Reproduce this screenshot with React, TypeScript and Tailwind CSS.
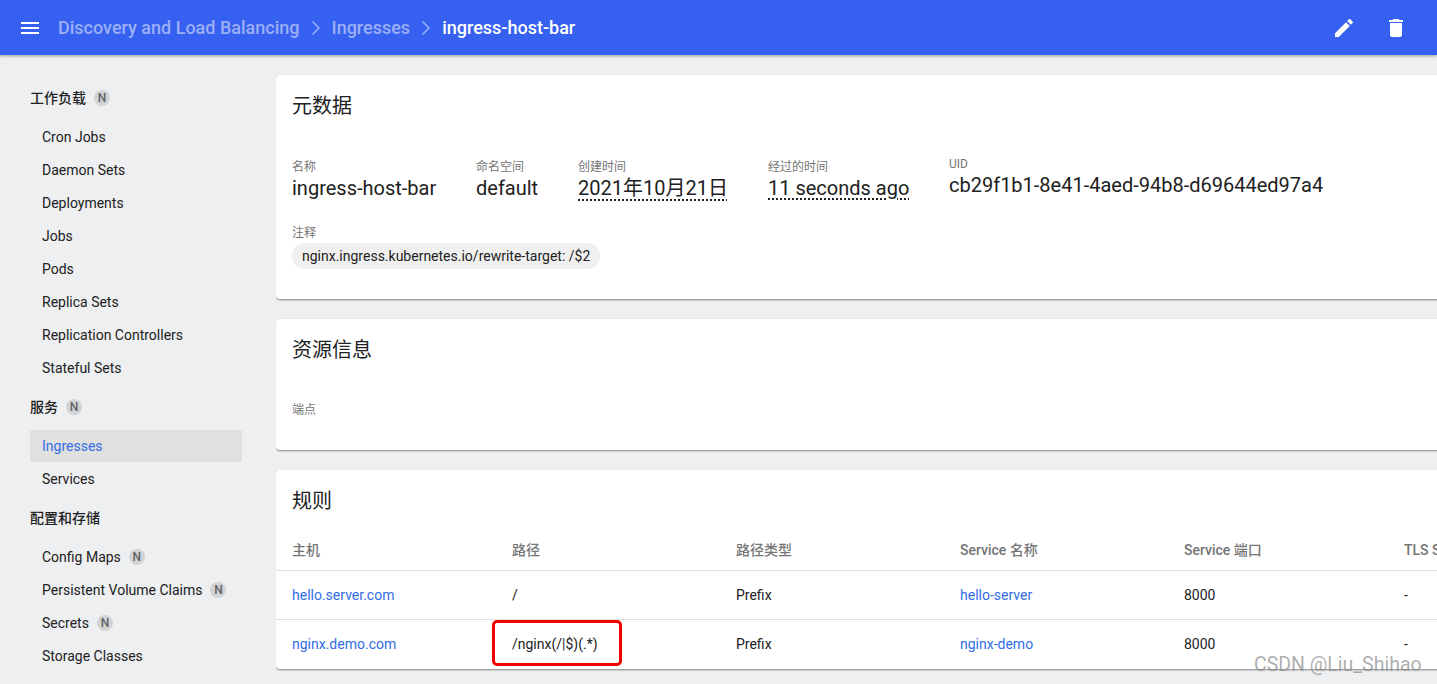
import { ChevronRight } from "lucide-react";

const font = { sans: "font-['Roboto','Noto_Sans_CJK_SC',sans-serif]" };

function NBadge() {
  return (
    <span className="ml-[8px] flex h-[16px] w-[16px] items-center justify-center rounded-full bg-[#d2d3d5] text-[12px] font-medium leading-none text-[#5f6368]">
      N
    </span>
  );
}

function NavItem({ label, badge, active }: { label: string; badge?: boolean; active?: boolean }) {
  return (
    <div
      className={`flex h-[32px] items-center rounded-[2px] pl-[12px] text-[14px] ${
        active ? "bg-[#e0e0e0] text-[#326de6]" : "text-[#212121]"
      }`}
    >
      {label}
      {badge && <NBadge />}
    </div>
  );
}

function Sidebar() {
  return (
    <aside className="w-[276px] shrink-0 pl-[30px] pr-[34px] pt-[27px]">
      <div className="flex h-[32px] items-center text-[14px] font-medium text-[#212121]">
        工作负载
        <NBadge />
      </div>
      <div className="mt-[7px] flex flex-col gap-[1px]">
        <NavItem label="Cron Jobs" />
        <NavItem label="Daemon Sets" />
        <NavItem label="Deployments" />
        <NavItem label="Jobs" />
        <NavItem label="Pods" />
        <NavItem label="Replica Sets" />
        <NavItem label="Replication Controllers" />
        <NavItem label="Stateful Sets" />
      </div>
      <div className="mt-[7px] flex h-[32px] items-center text-[14px] font-medium text-[#212121]">
        服务
        <NBadge />
      </div>
      <div className="mt-[7px] flex flex-col gap-[1px]">
        <NavItem label="Ingresses" active />
        <NavItem label="Services" />
      </div>
      <div className="mt-[7px] flex h-[32px] items-center text-[14px] font-medium text-[#212121]">配置和存储</div>
      <div className="mt-[7px] flex flex-col gap-[1px]">
        <NavItem label="Config Maps" badge />
        <NavItem label="Persistent Volume Claims" badge />
        <NavItem label="Secrets" badge />
        <NavItem label="Storage Classes" />
      </div>
    </aside>
  );
}

function Meta({ label, value, dotted, className }: { label: string; value: string; dotted?: string; className: string }) {
  return (
    <div className={className}>
      <div className="text-[12px] leading-[16px] text-[#757575]">{label}</div>
      <div className="mt-[1px] text-[20px] leading-[24px] text-[#212121]">
        <span className={dotted}>{value}</span>
      </div>
    </div>
  );
}

function Card({ title, className, children }: { title: string; className: string; children: React.ReactNode }) {
  return (
    <section className={`w-[1300px] rounded-[4px] bg-white px-[16px] shadow-[0_1px_2px_rgba(0,0,0,0.45)] ${className}`}>
      <h2 className="pt-[18px] text-[20px] font-normal leading-[26px] text-[#212121]">{title}</h2>
      {children}
    </section>
  );
}

const rows = [
  { host: "hello.server.com", path: "/", service: "hello-server" },
  { host: "nginx.demo.com", path: "/nginx(/|$)(.*)", service: "nginx-demo" },
];

const cols = "grid grid-cols-[220px_224px_224px_224px_220px_100px] items-center";

export default function App() {
  return (
    <div className={`flex h-[684px] w-[1437px] flex-col overflow-hidden bg-[#eeeff1] ${font.sans}`}>
      <header className="relative z-10 flex h-[55px] shrink-0 items-center bg-[#3560f0] pl-[21px] shadow-[0_1px_3px_rgba(0,0,0,0.35)]">
        <svg width="18" height="12" viewBox="0 0 18 12" fill="white" className="mr-[19px]">
          <path d="M0 12h18v-2H0v2zm0-5h18V5H0v2zM0 0v2h18V0H0z" />
        </svg>
        <span className="text-[18px] font-medium text-white/50">Discovery and Load Balancing</span>
        <ChevronRight className="mx-[4px] h-[24px] w-[24px] text-white/50" strokeWidth={1.5} />
        <span className="text-[18px] font-medium text-white/50">Ingresses</span>
        <ChevronRight className="mx-[4px] h-[24px] w-[24px] text-white/50" strokeWidth={1.5} />
        <span className="text-[18px] font-medium text-white">ingress-host-bar</span>
        <div className="ml-auto mr-[29px] flex items-center gap-[28px]">
          <svg width="24" height="24" viewBox="0 0 24 24" fill="white">
            <path d="M3 17.25V21h3.75L17.81 9.94l-3.75-3.75L3 17.25zM20.71 7.04c.39-.39.39-1.02 0-1.41l-2.34-2.34c-.39-.39-1.02-.39-1.41 0l-1.83 1.83 3.75 3.75 1.83-1.83z" />
          </svg>
          <svg width="24" height="24" viewBox="0 0 24 24" fill="white">
            <path d="M6 19c0 1.1.9 2 2 2h8c1.1 0 2-.9 2-2V7H6v12zM19 4h-3.5l-1-1h-5l-1 1H5v2h14V4z" />
          </svg>
        </div>
      </header>

      <div className="flex min-h-0 flex-1">
        <Sidebar />
        <main className="min-w-0 flex-1 overflow-hidden pt-[20px]">
          <Card title="元数据" className="h-[224px]">
            <div className="mt-[40px] flex">
              <Meta label="名称" value="ingress-host-bar" className="w-[184px]" />
              <Meta label="命名空间" value="default" className="w-[102px]" />
              <Meta
                label="创建时间"
                value="2021年10月21日"
                dotted="underline decoration-dotted decoration-2 underline-offset-[4px]"
                className="w-[190px]"
              />
              <Meta
                label="经过的时间"
                value="11 seconds ago"
                dotted="underline decoration-dotted decoration-2 underline-offset-[3px]"
                className="w-[181px]"
              />
              <div className="-mt-[3px]">
                <div className="text-[12px] leading-[16px] text-[#757575]">UID</div>
                <div className="mt-[1px] text-[20px] leading-[24px] text-[#212121]">cb29f1b1-8e41-4aed-94b8-d69644ed97a4</div>
              </div>
            </div>
            <div className="mt-[25px] text-[12px] leading-[16px] text-[#757575]">注释</div>
            <span className="mt-[2px] inline-flex h-[26px] items-center rounded-full bg-[#f0f0f0] px-[10px] text-[14px] text-[#212121]">
              nginx.ingress.kubernetes.io/rewrite-target: /$2
            </span>
          </Card>

          <Card title="资源信息" className="mt-[20px] h-[131px]">
            <div className="mt-[39px] text-[12px] leading-[16px] text-[#757575]">端点</div>
          </Card>

          <Card title="规则" className="mt-[20px] h-[199px]">
            <div className="-mx-[16px]">
              <div className={`${cols} mt-[17px] h-[40px] border-b border-[#e0e0e0] pl-[16px] text-[14px] font-medium text-[#757575]`}>
                <div>主机</div>
                <div>路径</div>
                <div>路径类型</div>
                <div>Service 名称</div>
                <div>Service 端口</div>
                <div>TLS Secret</div>
              </div>
              {rows.map((r, i) => (
                <div
                  key={r.host}
                  className={`${cols} h-[49px] pl-[16px] text-[14px] text-[#212121] ${i === 0 ? "border-b border-[#e0e0e0]" : ""}`}
                >
                  <div className="text-[#326de6]">{r.host}</div>
                  <div className="relative">
                    {r.path}
                    {i === 1 && (
                      <span className="absolute left-[-20px] top-[-14px] h-[46px] w-[130px] rounded-[5px] border-[3px] border-[#f00000]" />
                    )}
                  </div>
                  <div>Prefix</div>
                  <div className="text-[#326de6]">{r.service}</div>
                  <div>8000</div>
                  <div>-</div>
                </div>
              ))}
            </div>
          </Card>
        </main>
      </div>

      <div className="absolute left-[1254px] top-[653px] text-[19.5px] leading-[24px] text-[#8a8a8a]/70">CSDN @Liu_Shihao</div>
    </div>
  );
}
